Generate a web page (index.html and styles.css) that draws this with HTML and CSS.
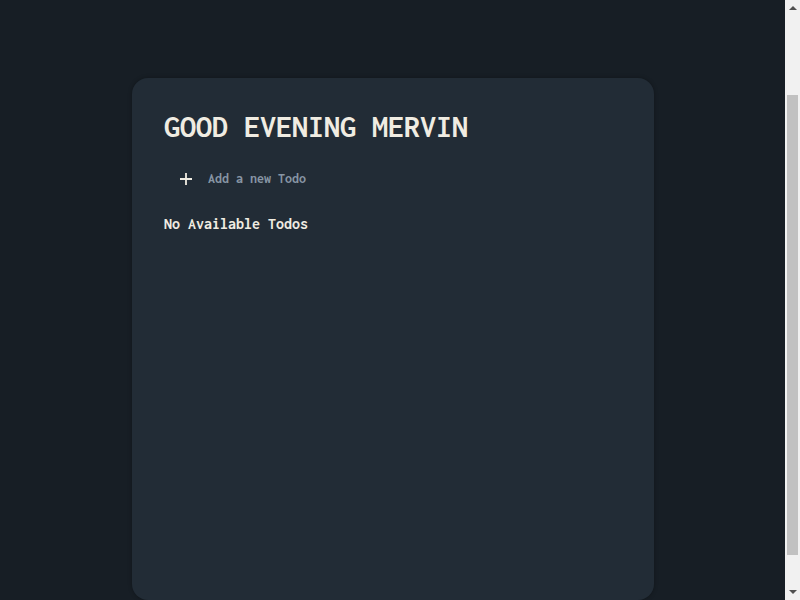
FILE: index.html
```html
<!DOCTYPE html>
<html lang="en">
<head>
  <meta charset="utf-8">
  <meta name="viewport" content="width=device-width, initial-scale=1">
  <title>Todos</title>
  <link rel="stylesheet" href="styles.css">
</head>
<body>
  <main class="page">
    <section class="card">
      <h1 class="greeting">GOOD EVENING MERVIN</h1>
      <form class="new-todo">
        <button class="add" type="submit" aria-label="Add">
          <svg viewBox="0 0 12 12" width="12" height="12" aria-hidden="true"><path d="M5.1 0h1.8v5.1H12v1.8H6.9V12H5.1V6.9H0V5.1h5.1z" fill="currentColor"/></svg>
        </button>
        <input class="field" type="text" aria-label="New todo" placeholder="Add a new Todo">
      </form>
      <p class="empty">No Available Todos</p>
    </section>
  </main>
  <div class="scrollbar" aria-hidden="true">
    <svg class="arrow" viewBox="0 0 8 4" width="8" height="4"><path d="M4 0 8 4H0z" fill="currentColor"/></svg>
    <div class="track"><div class="thumb"></div></div>
    <svg class="arrow" viewBox="0 0 8 4" width="8" height="4"><path d="M0 0h8L4 4z" fill="currentColor"/></svg>
  </div>
</body>
</html>
```
FILE: styles.css
```css
* {
  box-sizing: border-box;
}

body {
  margin: 0;
  min-height: 100vh;
  display: flex;
  background: #171e25;
  color: #f0ece2;
  font-family: Inconsolata, "Liberation Mono", monospace;
}

.page {
  flex: 1;
  display: flex;
  justify-content: center;
  padding: 78px 0 0 1px;
}

.card {
  width: 90%;
  max-width: 522px;
  padding: 32px;
  border-radius: 16px;
  background: #222c36;
  box-shadow: 0 0 4px rgba(0, 0, 0, 0.3);
}

.greeting {
  margin: 0;
  font-size: 32px;
  line-height: 34px;
  font-weight: 700;
}

.new-todo {
  display: flex;
  align-items: center;
  gap: 16px;
  height: 38px;
  margin: 16px 0;
  padding: 0 16px;
}

.add {
  display: flex;
  padding: 0;
  border: 0;
  background: none;
  color: inherit;
}

.field {
  flex: 1;
  min-width: 0;
  padding: 0;
  border: 0;
  outline: 0;
  background: none;
  color: inherit;
  font: 700 14px/20px Inconsolata, "Liberation Mono", monospace;
}

.field::placeholder {
  color: #8795a4;
  opacity: 1;
}

.empty {
  margin: 0;
  font-size: 16px;
  line-height: 20px;
  font-weight: 700;
}

.scrollbar {
  width: 15px;
  display: flex;
  flex-direction: column;
  align-items: center;
  padding: 6px 2px;
  background: #f1f1f1;
  color: #505050;
}

.track {
  flex: 1;
  align-self: stretch;
  padding: 85px 0 35px;
}

.thumb {
  height: 100%;
  background: #c1c1c1;
}
```
